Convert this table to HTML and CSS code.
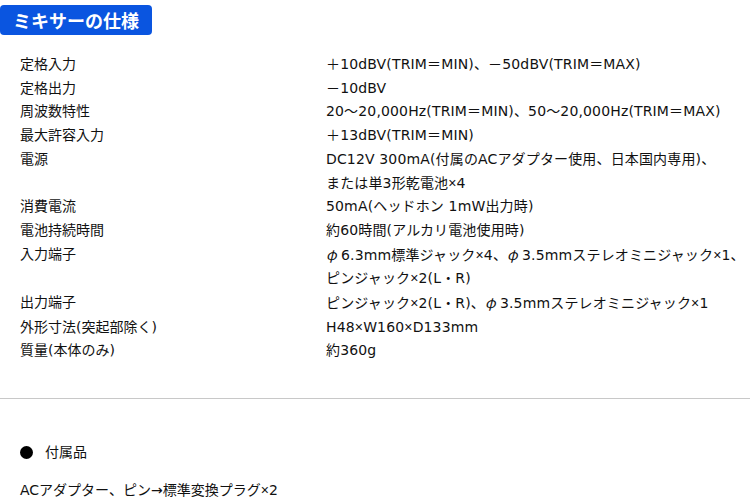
FILE: index.html
```html
<!DOCTYPE html>
<html lang="ja">
<head>
<meta charset="utf-8">
<link rel="stylesheet" href="styles.css">
</head>
<body>
<div class="page">
  <h2 class="badge">ミキサーの仕様</h2>
  <dl class="spec">
    <dt>定格入力</dt><dd>＋10dBV(TRIM＝MIN)、－50dBV(TRIM＝MAX)</dd>
    <dt>定格出力</dt><dd>－10dBV</dd>
    <dt>周波数特性</dt><dd>20～20,000Hz(TRIM＝MIN)、50～20,000Hz(TRIM＝MAX)</dd>
    <dt>最大許容入力</dt><dd>＋13dBV(TRIM＝MIN)</dd>
    <dt>電源</dt><dd>DC12V 300mA(付属のACアダプター使用、日本国内専用)、<br>または単3形乾電池<span class="x">×</span>4</dd>
    <dt>消費電流</dt><dd>50mA(ヘッドホン 1mW出力時)</dd>
    <dt>電池持続時間</dt><dd>約60時間(アルカリ電池使用時)</dd>
    <dt>入力端子</dt><dd><span class="phi">φ</span>6.3mm標準ジャック<span class="x">×</span>4、<span class="phi">φ</span>3.5mmステレオミニジャック<span class="x">×</span>1、<br>ピンジャック<span class="x">×</span>2(L・R)</dd>
    <dt>出力端子</dt><dd>ピンジャック<span class="x">×</span>2(L・R)、<span class="phi">φ</span>3.5mmステレオミニジャック<span class="x">×</span>1</dd>
    <dt>外形寸法(突起部除く)</dt><dd>H48<span class="x">×</span>W160<span class="x">×</span>D133mm</dd>
    <dt>質量(本体のみ)</dt><dd>約360g</dd>
  </dl>
  <hr class="rule">
  <div class="acc">
    <p class="acc-title"><span class="dot"></span>付属品</p>
    <p class="acc-text">ACアダプター、ピン→標準変換プラグ<span class="x">×</span>2</p>
  </div>
</div>
</body>
</html>
```

FILE: styles.css
```css
html, body {
  margin: 0;
  padding: 0;
  background: #fff;
}
body {
  font-family: "DejaVu Sans", "Noto Sans CJK JP", sans-serif;
  font-size: 14px;
  color: #111;
}
.phi {
  display: inline-block;
  width: 15px;
  font-family: "Noto Sans CJK JP", sans-serif;
  font-style: italic;
}
.x {
  font-family: "Liberation Sans", sans-serif;
}
.page {
  width: 750px;
  padding-top: 5px;
}
.badge {
  display: inline-block;
  margin: 0;
  height: 30px;
  line-height: 30px;
  padding: 0 13px;
  background: #0a55e0;
  color: #fff;
  font-family: "Noto Sans CJK JP", sans-serif;
  font-size: 18px;
  font-weight: 700;
  border-radius: 4px;
}
.spec {
  display: grid;
  grid-template-columns: 306px 1fr;
  margin: 18px 0 0 20px;
  line-height: 23.7px;
}
.spec dt, .spec dd {
  margin: 0;
  white-space: nowrap;
}
.spec dd {
  letter-spacing: 0.15px;
}
.rule {
  margin: 35px 0 0 0;
  border: 0;
  border-top: 1px solid #c8c8c8;
  height: 0;
}
.acc {
  padding-left: 20px;
}
.acc p {
  margin: 0;
}
.acc-title {
  display: flex;
  align-items: center;
  margin-top: 41px !important;
  line-height: 24px;
}
.dot {
  width: 13px;
  height: 13px;
  border-radius: 50%;
  background: #000;
  margin-right: 12px;
}
.acc-text {
  margin-top: 14px !important;
  line-height: 24px;
}
```
